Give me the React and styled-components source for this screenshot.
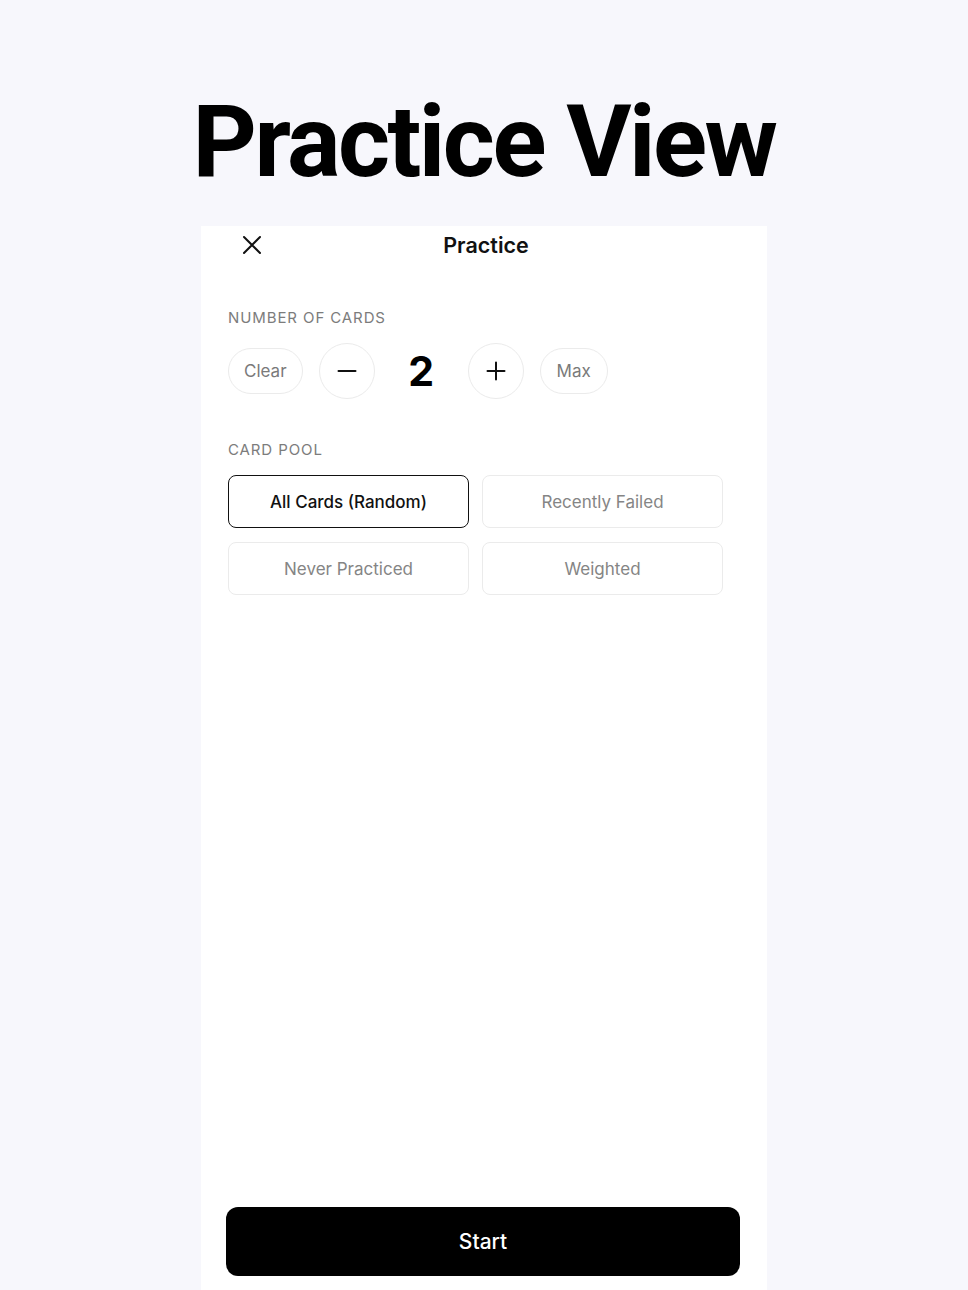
import React, { useState } from "react";
import styled, { createGlobalStyle } from "styled-components";

const GlobalStyle = createGlobalStyle`
  html, body {
    margin: 0;
    padding: 0;
    background: #f7f7fc;
    font-family: Inter, "Noto Sans", sans-serif;
    -webkit-font-smoothing: antialiased;
  }
  * { box-sizing: border-box; }
`;

const Page = styled.div`
  display: flex;
  flex-direction: column;
  align-items: center;
  min-height: 1290px;
`;

const Title = styled.h1`
  margin: 92px 0 34px;
  font-family: Roboto, Inter, sans-serif;
  font-size: 100px;
  line-height: 100px;
  font-weight: 700;
  letter-spacing: -2.5px;
  color: #000;
`;

const Panel = styled.div`
  width: 566px;
  height: 1064px;
  background: #fff;
  display: flex;
  flex-direction: column;
  padding: 0 27px;
`;

const Header = styled.div`
  position: relative;
  height: 38px;
  display: flex;
  align-items: center;
  justify-content: center;
`;

const CloseButton = styled.button`
  position: absolute;
  left: 12px;
  top: 7px;
  width: 24px;
  height: 24px;
  padding: 0;
  border: none;
  background: none;
  display: flex;
  align-items: center;
  justify-content: center;
  cursor: pointer;
`;

const HeaderTitle = styled.div`
  font-size: 21.5px;
  font-weight: 600;
  color: #111;
  margin-left: 4px;
`;

const Section = styled.div`
  margin-top: ${(p) => p.$top}px;
  display: flex;
  flex-direction: column;
`;

const Label = styled.div`
  font-size: 15px;
  line-height: 18px;
  font-weight: 400;
  letter-spacing: 0.9px;
  color: #7c7c7c;
  text-transform: uppercase;
  margin-bottom: 16px;
`;

const CounterRow = styled.div`
  display: flex;
  align-items: center;
  height: 56px;
`;

const Pill = styled.button`
  height: 46px;
  padding: 0 ${(p) => p.$pad}px;
  margin-left: ${(p) => p.$ml || 0}px;
  border: 1.5px solid #ebebeb;
  border-radius: 23px;
  background: #fff;
  font-family: inherit;
  font-size: 17px;
  color: #7a7a7a;
  cursor: pointer;
`;

const RoundButton = styled.button`
  width: 56px;
  height: 56px;
  border-radius: 50%;
  border: 1.5px solid #ebebeb;
  background: #fff;
  display: flex;
  align-items: center;
  justify-content: center;
  padding: 0;
  margin-left: ${(p) => p.$ml || 0}px;
  cursor: pointer;
`;

const Count = styled.div`
  width: 93px;
  text-align: center;
  font-size: 41px;
  font-weight: 700;
  color: #000;
`;

const PoolGrid = styled.div`
  display: grid;
  grid-template-columns: repeat(2, 241px);
  grid-auto-rows: 53px;
  column-gap: 13px;
  row-gap: 14px;
`;

const PoolOption = styled.button`
  border-radius: 8px;
  border: ${(p) => (p.$active ? "1.5px solid #111" : "1.5px solid #ebebeb")};
  background: #fff;
  font-family: inherit;
  font-size: 17px;
  font-weight: ${(p) => (p.$active ? 500 : 400)};
  color: ${(p) => (p.$active ? "#111" : "#858585")};
  cursor: pointer;
`;

const Spacer = styled.div`
  flex: 1;
`;

const StartButton = styled.button`
  height: 69px;
  margin: 0 0 14px -2px;
  width: 514px;
  border: none;
  border-radius: 12px;
  background: #000;
  color: #fff;
  font-family: inherit;
  font-size: 21px;
  font-weight: 500;
  cursor: pointer;
`;

const XIcon = () => (
  <svg width="20" height="20" viewBox="0 0 20 20" fill="none">
    <path d="M2 2L18 18M18 2L2 18" stroke="#111" strokeWidth="2" strokeLinecap="round" />
  </svg>
);

const MinusIcon = () => (
  <svg width="20" height="20" viewBox="0 0 20 20" fill="none">
    <path d="M1.5 10H18.5" stroke="#111" strokeWidth="2" strokeLinecap="round" />
  </svg>
);

const PlusIcon = () => (
  <svg width="20" height="20" viewBox="0 0 20 20" fill="none">
    <path d="M1.5 10H18.5M10 1.5V18.5" stroke="#111" strokeWidth="2" strokeLinecap="round" />
  </svg>
);

const pools = ["All Cards (Random)", "Recently Failed", "Never Practiced", "Weighted"];

export default function App() {
  const [count, setCount] = useState(2);
  const [pool, setPool] = useState(pools[0]);

  return (
    <>
      <GlobalStyle />
      <Page>
        <Title>Practice View</Title>
        <Panel>
          <Header>
            <CloseButton aria-label="Close">
              <XIcon />
            </CloseButton>
            <HeaderTitle>Practice</HeaderTitle>
          </Header>

          <Section $top={45}>
            <Label>Number of cards</Label>
            <CounterRow>
              <Pill $pad={15} onClick={() => setCount(0)}>Clear</Pill>
              <RoundButton $ml={16} onClick={() => setCount((c) => Math.max(0, c - 1))}>
                <MinusIcon />
              </RoundButton>
              <Count>{count}</Count>
              <RoundButton onClick={() => setCount((c) => c + 1)}>
                <PlusIcon />
              </RoundButton>
              <Pill $pad={16} $ml={16} onClick={() => setCount(20)}>Max</Pill>
            </CounterRow>
          </Section>

          <Section $top={42}>
            <Label>Card pool</Label>
            <PoolGrid>
              {pools.map((p) => (
                <PoolOption key={p} $active={p === pool} onClick={() => setPool(p)}>
                  {p}
                </PoolOption>
              ))}
            </PoolGrid>
          </Section>

          <Spacer />
          <StartButton>Start</StartButton>
        </Panel>
      </Page>
    </>
  );
}
